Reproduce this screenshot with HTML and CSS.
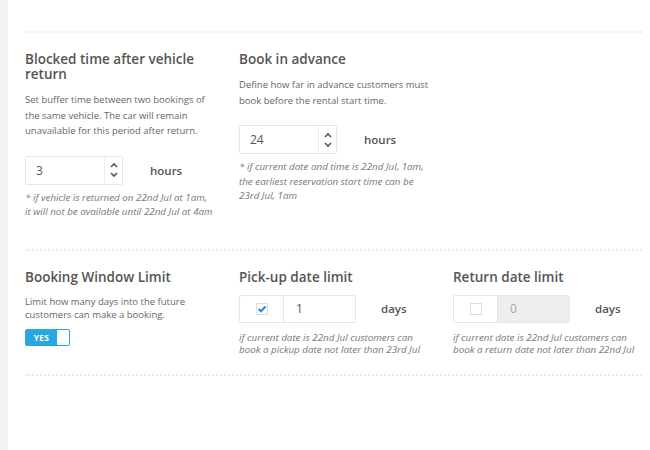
FILE: index.html
```html
<!DOCTYPE html>
<html lang="en">
<head>
    <meta charset="UTF-8">
    <title>Booking settings</title>
    <link rel="stylesheet" href="styles.css">
</head>
<body>
    <div class="sidebar"></div>
    <div class="content">
        <div class="row">
            <div class="col">
                <h3>Blocked time after vehicle return</h3>
                <p class="desc">Set buffer time between two bookings of the same vehicle. The car will remain unavailable for this period after return.</p>
                <div class="field">
                    <div class="spin">
                        <span class="spin-value">3</span>
                        <span class="spin-btns">
                            <svg width="8" height="6" viewBox="0 0 8 6"><path d="M1 5L4 2L7 5" fill="none" stroke="#555" stroke-width="1.6"/></svg>
                            <svg width="8" height="6" viewBox="0 0 8 6"><path d="M1 1L4 4L7 1" fill="none" stroke="#555" stroke-width="1.6"/></svg>
                        </span>
                    </div>
                    <span class="unit">hours</span>
                </div>
                <p class="note">* if vehicle is returned on 22nd Jul at 1am, it will not be available until 22nd Jul at 4am</p>
            </div>
            <div class="col">
                <h3>Book in advance</h3>
                <p class="desc">Define how far in advance customers must book before the rental start time.</p>
                <div class="field">
                    <div class="spin">
                        <span class="spin-value">24</span>
                        <span class="spin-btns">
                            <svg width="8" height="6" viewBox="0 0 8 6"><path d="M1 5L4 2L7 5" fill="none" stroke="#555" stroke-width="1.6"/></svg>
                            <svg width="8" height="6" viewBox="0 0 8 6"><path d="M1 1L4 4L7 1" fill="none" stroke="#555" stroke-width="1.6"/></svg>
                        </span>
                    </div>
                    <span class="unit">hours</span>
                </div>
                <p class="note">* if current date and time is 22nd Jul, 1am, the earliest reservation start time can be 23rd Jul, 1am</p>
            </div>
            <div class="col"></div>
        </div>

        <div class="row row-limits">
            <div class="col">
                <h3>Booking Window Limit</h3>
                <p class="desc">Limit how many days into the future customers can make a booking.</p>
                <div class="toggle">
                    <span class="toggle-label">YES</span>
                    <span class="toggle-knob"></span>
                </div>
            </div>
            <div class="col">
                <h3>Pick-up date limit</h3>
                <div class="field">
                    <div class="limit">
                        <span class="check-cell">
                            <span class="check">
                                <svg width="10" height="8" viewBox="0 0 10 8"><path d="M1.5 4L4 6.3L8.5 1.5" fill="none" stroke="#1d8fd0" stroke-width="2"/></svg>
                            </span>
                        </span>
                        <span class="limit-value">1</span>
                    </div>
                    <span class="unit days">days</span>
                </div>
                <p class="note">if current date is 22nd Jul customers can book a pickup date not later than 23rd Jul</p>
            </div>
            <div class="col">
                <h3>Return date limit</h3>
                <div class="field">
                    <div class="limit">
                        <span class="check-cell">
                            <span class="check"></span>
                        </span>
                        <span class="limit-value disabled">0</span>
                    </div>
                    <span class="unit days">days</span>
                </div>
                <p class="note">if current date is 22nd Jul customers can book a return date not later than 22nd Jul</p>
            </div>
        </div>
    </div>
</body>
</html>
```

FILE: styles.css
```css
html, body {
    margin: 0;
    height: 100%;
}

body {
    display: flex;
    font-family: "Open Sans", sans-serif;
    color: #555;
    background: #fff;
}

.sidebar {
    width: 8px;
    background: #f2f2f4;
    flex-shrink: 0;
}

.content {
    width: 617px;
    padding: 31px 0 0 17px;
}

.row {
    display: grid;
    grid-template-columns: 214px 214px 189px;
    border-top: 2px dotted #ececec;
    padding: 19px 0 29px;
}

.row-limits {
    border-bottom: 2px dotted #ececec;
    padding-bottom: 17px;
}

.col {
    padding-right: 24px;
}

.col:last-child {
    padding-right: 0;
}

h3 {
    margin: 0 0 10px;
    font-size: 13.5px;
    font-weight: 600;
    line-height: 15px;
    color: #555;
}

.desc {
    margin: 0 0 17px;
    font-size: 9.5px;
    line-height: 15.5px;
    color: #666;
}

.row-limits .desc {
    line-height: 13px;
    margin-bottom: 8px;
}

.field {
    display: flex;
    align-items: center;
}

.spin {
    display: flex;
    width: 98px;
    height: 29px;
    border: 1px solid #e6e6e6;
    box-sizing: border-box;
    border-radius: 2px;
}

.spin-value {
    flex: 1;
    padding-left: 10px;
    font-size: 12px;
    line-height: 27px;
    color: #555;
}

.spin-btns {
    width: 17px;
    border-left: 1px solid #eee;
    display: flex;
    flex-direction: column;
    align-items: center;
    justify-content: center;
    gap: 4px;
}

.spin-btns svg {
    display: block;
}

.unit {
    margin-left: 27px;
    font-size: 11.5px;
    font-weight: 600;
    color: #555;
}

.unit.days {
    margin-left: 25px;
}

.note {
    margin: 6px 0 0;
    font-size: 9.8px;
    font-style: italic;
    line-height: 14.5px;
    color: #777;
}

.row-limits .note {
    margin-top: 9px;
    line-height: 12.5px;
}

.toggle {
    display: flex;
    align-items: center;
    width: 45px;
    height: 17px;
    box-sizing: border-box;
    background: #29a8e0;
    border: 1px solid #29a8e0;
    border-radius: 2px;
}

.toggle-label {
    flex: 1;
    text-align: center;
    font-size: 8.5px;
    font-weight: 700;
    letter-spacing: 0.3px;
    color: #fff;
}

.toggle-knob {
    width: 12px;
    height: 15px;
    background: #fff;
    border-radius: 1px;
}

.limit {
    display: flex;
    width: 117px;
    height: 28px;
    border: 1px solid #e6e6e6;
    box-sizing: border-box;
    border-radius: 2px;
}

.check-cell {
    width: 43px;
    border-right: 1px solid #e6e6e6;
    display: flex;
    align-items: center;
    justify-content: center;
}

.check {
    width: 12px;
    height: 12px;
    border: 1px solid #ddd;
    box-sizing: border-box;
    display: flex;
    align-items: center;
    justify-content: center;
    background: #fff;
}

.limit-value {
    flex: 1;
    padding-left: 12px;
    font-size: 12px;
    line-height: 26px;
    color: #555;
}

.limit-value.disabled {
    background: #eee;
    color: #aaa;
}
```
